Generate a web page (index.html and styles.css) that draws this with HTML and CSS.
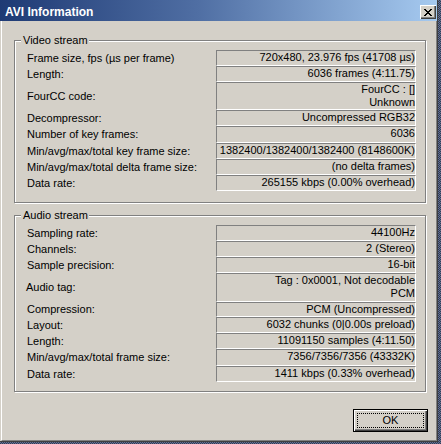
FILE: index.html
```html
<!DOCTYPE html>
<html>
<head>
<meta charset="utf-8">
<link rel="stylesheet" href="styles.css">
</head>
<body>
<div class="window">
  <div class="titlebar">
    <span class="title">AVI Information</span>
    <span class="close"><svg width="8" height="7" viewBox="0 0 8 7" shape-rendering="crispEdges"><path d="M0 0h2v1H0zM6 0h2v1H6zM1 1h2v1H1zM5 1h2v1H5zM2 2h4v1H2zM3 3h2v1H3zM2 4h4v1H2zM1 5h2v1H1zM5 5h2v1H5zM0 6h2v1H0zM6 6h2v1H6z" fill="#000"/></svg></span>
  </div>
  <div class="frame">
    <section class="group video">
      <span class="legend">Video stream</span>
      <div class="rows">
        <div class="label">Frame size, fps (µs per frame)</div><div class="value">720x480, 23.976 fps (41708 µs)</div>
        <div class="label">Length:</div><div class="value">6036 frames (4:11.75)</div>
        <div class="label">FourCC code:</div><div class="value h28">FourCC : []<br>Unknown</div>
        <div class="label">Decompressor:</div><div class="value">Uncompressed RGB32</div>
        <div class="label">Number of key frames:</div><div class="value h17">6036</div>
        <div class="label">Min/avg/max/total key frame size:</div><div class="value">1382400/1382400/1382400 (8148600K)</div>
        <div class="label">Min/avg/max/total delta frame size:</div><div class="value">(no delta frames)</div>
        <div class="label">Data rate:</div><div class="value">265155 kbps (0.00% overhead)</div>
      </div>
    </section>
    <section class="group audio">
      <span class="legend">Audio stream</span>
      <div class="rows">
        <div class="label">Sampling rate:</div><div class="value">44100Hz</div>
        <div class="label">Channels:</div><div class="value">2 (Stereo)</div>
        <div class="label">Sample precision:</div><div class="value">16-bit</div>
        <div class="label shift">Audio tag:</div><div class="value h29">Tag : 0x0001, Not decodable<br>PCM</div>
        <div class="label">Compression:</div><div class="value h15">PCM (Uncompressed)</div>
        <div class="label">Layout:</div><div class="value">6032 chunks (0|0.00s preload)</div>
        <div class="label">Length:</div><div class="value">11091150 samples (4:11.50)</div>
        <div class="label">Min/avg/max/total frame size:</div><div class="value h17">7356/7356/7356 (43332K)</div>
        <div class="label">Data rate:</div><div class="value">1411 kbps (0.33% overhead)</div>
      </div>
    </section>
    <div class="buttons">
      <button class="btn"><span class="focus">OK</span></button>
    </div>
  </div>
</div>
</body>
</html>
```
FILE: styles.css
```css
html, body {
  margin: 0;
  padding: 0;
}
body {
  width: 441px;
  height: 444px;
  overflow: hidden;
  background: conic-gradient(#2f3b58 25%, #66728f 0 50%, #2f3b58 0 75%, #66728f 0) 0 0 / 2px 2px;
  font-family: "Liberation Sans", Arial, sans-serif;
  font-size: 11px;
  color: #000;
}
.window {
  width: 438px;
  height: 442px;
  box-sizing: border-box;
  border-right: 1px solid #404040;
  border-bottom: 1px solid #404040;
  background: #d4d0c8;
  display: flex;
  flex-direction: column;
}
.titlebar {
  flex: none;
  height: 21px;
  box-sizing: border-box;
  padding: 0 1px 0 5px;
  display: flex;
  justify-content: space-between;
  align-items: flex-start;
  background: linear-gradient(90deg, #1e3a74 0%, #4f6ea3 45%, #a6caf0 100%);
}
.title {
  color: #fff;
  font-weight: bold;
  font-size: 12px;
  line-height: 14px;
  padding-top: 5px;
}
.close {
  margin-top: 5px;
  width: 16px;
  height: 14px;
  box-sizing: border-box;
  padding-top: 1px;
  background: #d4d0c8;
  box-shadow: inset 1px 1px #fff, inset -1px -1px #404040, inset -2px -2px #808080;
  display: flex;
  align-items: center;
  justify-content: center;
}
.close svg {
  display: block;
}
.frame {
  flex: 1;
  margin-left: 1px;
  border-left: 1px solid #fff;
  border-right: 1px solid #808080;
  border-bottom: 1px solid #808080;
  padding: 19px 8px 0 12px;
  display: flex;
  flex-direction: column;
}
.group {
  position: relative;
  width: 412px;
  box-sizing: border-box;
  border: 1px solid #808080;
  box-shadow: inset 1px 1px #fff, 1px 1px #fff;
}
.video {
  padding: 9px 9px 11px 0;
}
.audio {
  margin-top: 12px;
  padding: 9px 9px 9px 0;
}
.legend {
  position: absolute;
  left: 6px;
  top: -7px;
  padding: 0 1px 0 2px;
  background: #d4d0c8;
  line-height: 13px;
}
.rows {
  display: grid;
  grid-template-columns: 201px 200px;
}
.label {
  display: flex;
  align-items: center;
  padding-left: 12px;
  line-height: 13px;
  white-space: nowrap;
}
.label.shift {
  padding-left: 11px;
}
.value {
  box-sizing: border-box;
  height: 16px;
  border: 1px solid;
  border-color: #808080 #fff #fff #808080;
  padding: 0 0 0 1px;
  text-align: right;
  line-height: 13px;
  white-space: nowrap;
  overflow: hidden;
}
.value.h15 { height: 15px; }
.value.h17 { height: 17px; }
.value.h28 { height: 28px; }
.value.h29 { height: 29px; }
.buttons {
  display: flex;
  justify-content: flex-end;
  margin-top: 17px;
}
.btn {
  width: 75px;
  height: 23px;
  box-sizing: border-box;
  margin: 0;
  padding: 3px;
  border: 1px solid #000;
  border-radius: 0;
  background: #d4d0c8;
  box-shadow: inset 1px 1px #fff, inset -1px -1px #404040, inset -2px -2px #808080;
  font-family: "Liberation Sans", Arial, sans-serif;
  font-size: 11px;
  color: #000;
}
.focus {
  display: block;
  height: 100%;
  box-sizing: border-box;
  border: 1px dotted #000;
  line-height: 13px;
}
```
